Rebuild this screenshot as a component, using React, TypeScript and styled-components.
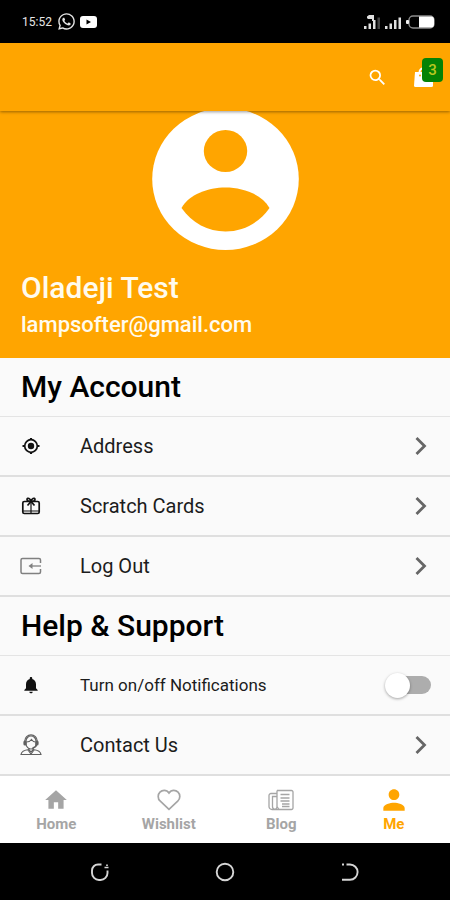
import React, { useState } from "react";
import styled, { createGlobalStyle } from "styled-components";
import { MdSearch, MdHome, MdPerson, MdNotifications } from "react-icons/md";
import { FaWhatsapp } from "react-icons/fa";

const ORANGE = "#ffa500";

const GlobalStyle = createGlobalStyle`
  *, *::before, *::after { box-sizing: border-box; }
  body { margin: 0; background: #fafafa; font-family: Roboto, sans-serif; }
  button { font: inherit; border: 0; background: none; padding: 0; cursor: pointer; }
  svg { display: block; flex: none; }
`;

const Screen = styled.div`
  min-height: 100vh;
  display: flex;
  flex-direction: column;
  background: #fafafa;
  color: #000;
`;

const StatusBar = styled.div`
  height: 43px;
  padding: 0 15px 0 22px;
  display: flex;
  align-items: center;
  justify-content: space-between;
  background: #000;
  color: #e6e6e6;
  font-size: 12px;
`;

const StatusGroup = styled.div`
  display: flex;
  align-items: center;
  gap: 4px;
`;

const Time = styled.span`
  margin-right: 1px;
`;

const AppBar = styled.header`
  position: relative;
  z-index: 1;
  height: 68px;
  padding: 0 16px;
  display: flex;
  align-items: center;
  justify-content: flex-end;
  gap: 26px;
  background: ${ORANGE};
  color: #fff;
  box-shadow: 0 1px 3px rgba(0, 0, 0, 0.4);
`;

const IconButton = styled.button`
  position: relative;
  display: flex;
  color: #fff;
`;

const Badge = styled.span`
  position: absolute;
  top: -8px;
  right: -9px;
  width: 21px;
  height: 24px;
  border-radius: 4px;
  background: #058205;
  color: #b9c820;
  font-size: 15px;
  font-weight: 500;
  line-height: 24px;
  text-align: center;
`;

const Hero = styled.section`
  padding: 0 21px 20px;
  background: ${ORANGE};
  color: #fffbee;
`;

const AvatarWrap = styled.div`
  display: flex;
  justify-content: center;
`;

const Name = styled.h1`
  margin: 20px 0 0;
  font-size: 30px;
  font-weight: 500;
  line-height: 36px;
`;

const Email = styled.p`
  margin: 6px 0 0;
  font-size: 22px;
  font-weight: 500;
  line-height: 26px;
`;

const Content = styled.main`
  flex: 1;
`;

const SectionTitle = styled.h2`
  margin: 0;
  height: 59px;
  padding: 0 21px;
  font-size: 30px;
  font-weight: 500;
  line-height: 58px;
  border-bottom: 1px solid #e4e4e4;
`;

const rowLayout = `
  width: 100%;
  padding: 0 23px 0 20px;
  display: grid;
  grid-template-columns: 22px 1fr auto;
  column-gap: 38px;
  align-items: center;
  text-align: left;
  color: #1c1c1c;
`;

const RowButton = styled.button`
  && {
    ${rowLayout}
    height: 60px;
    font-size: 20px;
    border-bottom: 2px solid #dfdfdf;
  }
`;

const RowLabel = styled.label`
  && {
    ${rowLayout}
    height: 60px;
    padding-right: 19px;
    font-size: 17px;
    border-bottom: 2px solid #dfdfdf;
  }
`;

const IconSlot = styled.span`
  display: flex;
  justify-content: center;
  color: #111;
`;

const Switch = styled.input`
  appearance: none;
  position: relative;
  width: 46px;
  height: 26px;
  margin: 0;
  display: flex;
  align-items: center;
  cursor: pointer;

  &::after {
    content: "";
    position: absolute;
    inset: 4px 0 4px 6px;
    border-radius: 9px;
    background: #adadad;
  }
  &::before {
    content: "";
    position: relative;
    z-index: 1;
    width: 25px;
    height: 25px;
    border-radius: 50%;
    background: #fff;
    box-shadow: 0 1px 3px rgba(0, 0, 0, 0.35);
  }
  &:checked { justify-content: flex-end; }
  &:checked::after { background: #ffd27f; }
`;

const BottomNav = styled.nav`
  height: 67px;
  display: grid;
  grid-template-columns: repeat(4, 1fr);
  background: #fff;
`;

const NavItem = styled.button<{ $active?: boolean }>`
  && {
    display: flex;
    flex-direction: column;
    align-items: center;
    padding-top: 11px;
    color: ${(p) => (p.$active ? ORANGE : "#a5a5a5")};
    font-size: 15px;
    font-weight: 700;
    line-height: 22px;
  }
`;

const NavIcon = styled.span`
  height: 26px;
  display: flex;
  align-items: center;
`;

const SystemBar = styled.footer`
  height: 57px;
  padding: 0 38px;
  display: grid;
  grid-template-columns: repeat(3, 1fr);
  justify-items: center;
  align-items: center;
  background: #000;
  color: #d6d6d6;
`;

const YoutubeIcon = () => (
  <svg width="17" height="12" viewBox="0 0 17 12">
    <rect width="17" height="12" rx="3" fill="#fff" />
    <path d="M6.500 3.500v5l4.500-2.500z" fill="#000" />
  </svg>
);

const SignalIcon = ({ data }: { data?: boolean }) => (
  <svg width="17" height="16" viewBox="0 0 17 16" fill="#e0e0e0">
    <rect x="0" y="12" width="2.500" height="3" />
    <rect x="4.500" y="9.500" width="2.500" height="5.500" />
    <rect x="9" y="6" width="2.500" height="9" />
    <rect x="13.500" y="3.500" width="2.500" height="11.500" opacity={data ? 0.3 : 1} />
    {data && <path d="M3 2.500 5 1h5v6H8V5H4L3 4z" />}
  </svg>
);

const BatteryIcon = () => (
  <svg width="29" height="14" viewBox="0 0 29 14">
    <rect x="3" y="1" width="25" height="12" rx="4" fill="none" stroke="#8a8a8a" strokeWidth="1.400" />
    <rect x="0" y="5" width="3" height="4" rx="1" fill="#eee" />
    <path d="M13 1.500h12a3 3 0 0 1 3 3v5a3 3 0 0 1-3 3H13z" fill="#fff" />
  </svg>
);

const BagIcon = () => (
  <svg width="20" height="22" viewBox="0 0 20 22">
    <path d="M5.500 9V6.500a4.500 4.500 0 0 1 9 0V9" fill="none" stroke="#fff" strokeWidth="2" />
    <path d="M1 6h18v13.500a1.500 1.500 0 0 1-1.500 1.500H1.500A1.500 1.500 0 0 1 0 19.500z" fill="#fff" />
    <circle cx="6" cy="9.500" r="1" fill={ORANGE} />
  </svg>
);

const Avatar = () => (
  <svg width="147" height="139" viewBox="0 0 147 139">
    <ellipse cx="73.500" cy="68" rx="73.300" ry="71" fill="#fff" />
    <ellipse cx="73.500" cy="40" rx="21.700" ry="21" fill={ORANGE} />
    <path d="M29.500 97C37 83.500 56 76.500 73.500 76.500S110 83.500 117.500 97C107 112 91 120.500 73.500 120.500S40 112 29.500 97Z" fill={ORANGE} />
  </svg>
);

const Chevron = () => (
  <svg width="12" height="20" viewBox="0 0 12 20">
    <path d="m1.500 2 8 8-8 8" fill="none" stroke="#666" strokeWidth="2.800" />
  </svg>
);

const TargetIcon = () => (
  <svg width="20" height="20" viewBox="0 0 20 20" fill="none" stroke="currentColor">
    <circle cx="10" cy="10" r="6.300" strokeWidth="1.700" />
    <circle cx="10" cy="10" r="3.200" fill="currentColor" stroke="none" />
    <path d="M10 2V4M10 16v2M1.500 10H4M16 10h2.500" strokeWidth="2.200" />
  </svg>
);

const GiftIcon = () => (
  <svg width="20" height="20" viewBox="0 0 20 20" fill="none" stroke="currentColor" strokeWidth="1.700">
    <rect x="1.800" y="5.500" width="16.400" height="12" rx="1.500" />
    <path d="M10 5.500C8 5.500 5.500 4.800 6 3.200S9.300 2 10 5.500C10.700 2 13.500 1.600 14 3.200S12 5.500 10 5.500Z" />
    <path d="M10 5.500 6.500 9.500M10 5.500l3.500 4" />
    <path d="M10 7v10M2 15h16" strokeWidth="1.200" />
  </svg>
);

const LogoutIcon = () => (
  <svg width="22" height="18" viewBox="0 0 22 18" fill="none" stroke="#808080" strokeWidth="1.500">
    <path d="M20.500 6V3a1.500 1.500 0 0 0-1.500-1.500H2.500A1.500 1.500 0 0 0 1 3v12a1.500 1.500 0 0 0 1.500 1.500H19a1.500 1.500 0 0 0 1.500-1.500v-3" />
    <path d="M21 9H10" strokeWidth="1.300" />
    <path d="m12.500 6-4 3 4 3z" fill="#808080" stroke="none" />
  </svg>
);

const SupportIcon = () => (
  <svg width="22" height="22" viewBox="0 0 22 22" fill="none" stroke="#606060" strokeWidth="1.200">
    <path d="M6 10V7a5 5 0 0 1 10 0v3c0 3-3 5-5 5s-5-2-5-5Z" />
    <path d="M4.800 11V7a6.200 6.200 0 0 1 12.400 0v4M6.500 8c3 0 4-1 5-2.500 1 1.500 2 2.500 4 2.500" />
    <rect x="4" y="7" width="2" height="4" rx="1" fill="#606060" />
    <rect x="16" y="7" width="2" height="4" rx="1" fill="#606060" />
    <path d="M16.500 11c0 2-1.500 2.500-4 2.500M9 14v2l2 2 2-2v-2" />
    <path d="M9 15.500c-4 .5-7.500 1.500-8 5h20c-.5-3.500-4-4.500-8-5M8 16l3 4 3-4" />
  </svg>
);

const HeartIcon = () => (
  <svg width="24" height="22" viewBox="0 0 24 22" fill="none" stroke="currentColor" strokeWidth="1.700">
    <path d="M12 20.300 3.300 12.200A6.200 6.200 0 0 1 1.200 7.400 6 6 0 0 1 7.200 1.400c2 0 3.700.9 4.800 2.600 1.100-1.700 2.800-2.600 4.800-2.600a6 6 0 0 1 6 6c0 1.800-.8 3.500-2.100 4.800Z" />
  </svg>
);

const NewsIcon = () => (
  <svg width="26" height="22" viewBox="0 0 26 22" fill="none" stroke="currentColor" strokeWidth="1.300">
    <path d="M9 1.500h14.500a1.500 1.500 0 0 1 1.500 1.500v16a1.500 1.500 0 0 1-1.500 1.500H4A3 3 0 0 1 1 17.500V6.500A2 2 0 0 1 3 4.500h6" />
    <path d="M9 1.500v16c0 4-4.500 3.500-4.500 0v-10H9M9 17.500l2 3" />
    <path d="M12.500 5.500h9M12.500 9h9M12.500 12h9M14 15h7.500M14 17.500h7.500" />
  </svg>
);

const RecentIcon = () => (
  <svg width="20" height="20" viewBox="0 0 20 20" fill="none" stroke="currentColor" strokeWidth="1.900">
    <path d="M11.500 2.500H8A6 6 0 0 0 2 8.500v2.500a7 7 0 0 0 7 7h1.500a7 7 0 0 0 7-7V8.500" />
    <path d="M14.500 5.500h4M17 2.500v1.500" strokeWidth="1.700" />
  </svg>
);

const HomeCircle = () => (
  <svg width="20" height="20" viewBox="0 0 20 20">
    <circle cx="10" cy="10" r="8.300" fill="none" stroke="currentColor" strokeWidth="1.900" />
  </svg>
);

const BackIcon = () => (
  <svg width="18" height="20" viewBox="0 0 18 20" fill="none" stroke="currentColor" strokeWidth="1.900">
    <path d="M5.500 2.500H9a7.500 7.500 0 0 1 0 15.200H1M1 2.500h2" />
  </svg>
);

const accountRows = [
  { label: "Address", icon: <TargetIcon /> },
  { label: "Scratch Cards", icon: <GiftIcon /> },
  { label: "Log Out", icon: <LogoutIcon /> },
];

const navItems = [
  { label: "Home", icon: <MdHome size={26} /> },
  { label: "Wishlist", icon: <HeartIcon /> },
  { label: "Blog", icon: <NewsIcon /> },
  { label: "Me", icon: <MdPerson size={32} /> },
];

export default function App() {
  const [notify, setNotify] = useState(false);
  const [tab, setTab] = useState("Me");

  return (
    <Screen>
      <GlobalStyle />
      <StatusBar>
        <StatusGroup>
          <Time>15:52</Time>
          <FaWhatsapp size={19} />
          <YoutubeIcon />
        </StatusGroup>
        <StatusGroup>
          <SignalIcon data />
          <SignalIcon />
          <BatteryIcon />
        </StatusGroup>
      </StatusBar>
      <AppBar>
        <IconButton aria-label="Search"><MdSearch size={21} /></IconButton>
        <IconButton aria-label="Cart">
          <BagIcon />
          <Badge>3</Badge>
        </IconButton>
      </AppBar>
      <Hero>
        <AvatarWrap><Avatar /></AvatarWrap>
        <Name>Oladeji Test</Name>
        <Email>lampsofter@gmail.com</Email>
      </Hero>
      <Content>
        <SectionTitle>My Account</SectionTitle>
        {accountRows.map((row) => (
          <RowButton key={row.label}>
            <IconSlot>{row.icon}</IconSlot>
            <span>{row.label}</span>
            <Chevron />
          </RowButton>
        ))}
        <SectionTitle>Help &amp; Support</SectionTitle>
        <RowLabel>
          <IconSlot><MdNotifications size={20} /></IconSlot>
          <span>Turn on/off Notifications</span>
          <Switch type="checkbox" role="switch" checked={notify} onChange={(e) => setNotify(e.target.checked)} />
        </RowLabel>
        <RowButton>
          <IconSlot><SupportIcon /></IconSlot>
          <span>Contact Us</span>
          <Chevron />
        </RowButton>
      </Content>
      <BottomNav>
        {navItems.map((item) => (
          <NavItem key={item.label} $active={tab === item.label} onClick={() => setTab(item.label)}>
            <NavIcon>{item.icon}</NavIcon>
            {item.label}
          </NavItem>
        ))}
      </BottomNav>
      <SystemBar>
        <RecentIcon />
        <HomeCircle />
        <BackIcon />
      </SystemBar>
    </Screen>
  );
}
